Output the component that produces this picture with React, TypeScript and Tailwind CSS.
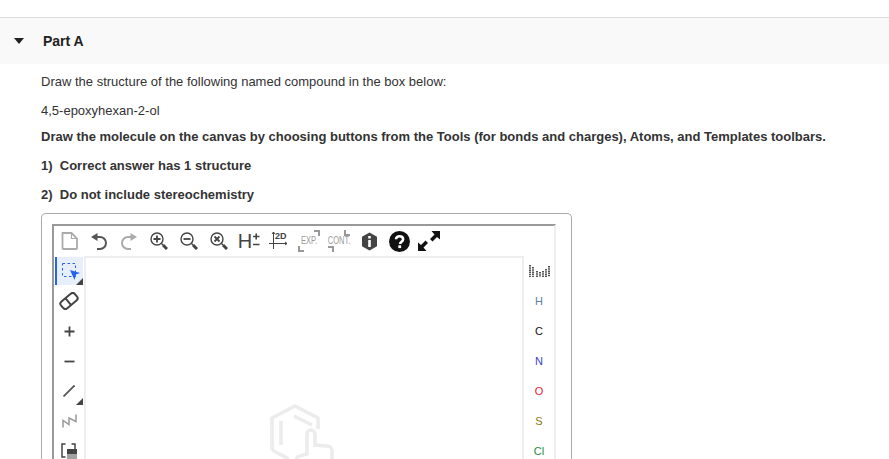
import type { ReactNode } from "react";

const dark = "#444";

function Tool({ children, corner }: { children: ReactNode; corner?: boolean }) {
  return (
    <div className="relative flex h-[30px] w-[30px] shrink-0 items-center justify-center">
      {children}
      {corner && (
        <span className="absolute right-[1px] bottom-[1px] h-0 w-0 border-b-[7px] border-l-[7px] border-b-[#444] border-l-transparent" />
      )}
    </div>
  );
}

function ZoomIcon({ mark }: { mark: "plus" | "minus" | "x" }) {
  return (
    <svg width="18" height="18" viewBox="0 0 18 18" fill="none" stroke={dark} strokeWidth="1.4">
      <circle cx="7" cy="7" r="6" />
      <path d="M11.5 11.5l1.5 1.5" />
      <path d="M13 13l4 4" strokeWidth="3" />
      {mark === "plus" && <path d="M3.500 7h7M7 3.500v7" strokeWidth="1.8" />}
      {mark === "minus" && <path d="M3.500 7h7" strokeWidth="1.8" />}
      {mark === "x" && <path d="M4.500 4.500l5 5M9.500 4.500l-5 5" strokeWidth="1.8" />}
    </svg>
  );
}

function TopToolbar() {
  return (
    <div className="flex h-[30px] shrink-0">
      <Tool>
        <svg width="17" height="18" viewBox="0 0 17 18" fill="none" stroke="#aaa" strokeWidth="1.8">
          <path d="M1.500 1h9l5.500 5.500V16a1 1 0 0 1-1 1H2.500a1 1 0 0 1-1-1z" />
          <path d="M10.500 1v5.500H16" strokeWidth="1.2" />
        </svg>
      </Tool>
      <Tool>
        <svg width="16" height="17" viewBox="0 0 16 17" fill="none" stroke="#555" strokeWidth="2">
          <path d="M5 4h4a6 6 0 0 1 0 12H6" />
          <path d="M6.500 0v8L0 4z" fill="#555" stroke="none" />
        </svg>
      </Tool>
      <Tool>
        <svg width="16" height="17" viewBox="0 0 16 17" fill="none" stroke="#aaa" strokeWidth="2">
          <path d="M11 4H7a6 6 0 0 0 0 12h3" />
          <path d="M9.500 0v8L16 4z" fill="#aaa" stroke="none" />
        </svg>
      </Tool>
      <Tool><ZoomIcon mark="plus" /></Tool>
      <Tool><ZoomIcon mark="minus" /></Tool>
      <Tool><ZoomIcon mark="x" /></Tool>
      <Tool>
        <span className="flex items-start text-[20px] leading-none text-[#444]">
          H
          <svg width="7" height="14" viewBox="0 0 7 14" stroke={dark} strokeWidth="1.6" className="mt-[2px] ml-[1px]">
            <path d="M0 3.500h6.500M3.200 0.500v6M0 11.500h6.500" />
          </svg>
        </span>
      </Tool>
      <Tool>
        <span className="relative block h-[20px] w-[20px]">
          <svg width="20" height="20" viewBox="0 0 20 20" fill="none" stroke={dark} strokeWidth="1">
            <path d="M4.500 1v17M0 12.500h18" />
            <path d="M3 3l1.500-2L6 3M16 11l2 1.500-2 1.500" />
          </svg>
          <span className="absolute top-[0px] left-[6px] text-[9px] leading-[10px] font-bold text-[#444]">2D</span>
        </span>
      </Tool>
      <Tool>
        <span className="relative block h-[22px] w-[22px]">
          <svg width="22" height="22" viewBox="0 0 22 22" fill="none" stroke="#999" strokeWidth="2">
            <path d="M16 1h5v5M1 16v5h5" />
          </svg>
          <span className="absolute inset-0 flex scale-x-75 items-center justify-center text-[10px] leading-none text-[#999]">EXP.</span>
        </span>
      </Tool>
      <Tool>
        <span className="relative block h-[22px] w-[22px]">
          <svg width="22" height="22" viewBox="0 0 22 22" fill="none" stroke="#999" strokeWidth="2">
            <path d="M17 0v5h5M0 17h5v5" />
          </svg>
          <span className="absolute inset-0 flex scale-x-75 items-center justify-center text-[10px] leading-none text-[#999]">CONT.</span>
        </span>
      </Tool>
      <Tool>
        <svg width="17" height="19" viewBox="0 0 17 19">
          <path d="M8.500 0.500l7.500 4.300v9.400l-7.500 4.300L1 14.200V4.800z" fill={dark} />
          <path d="M7.200 4h2.600v2.400H7.200zM7.200 8h2.600v7H7.200z" fill="#fff" />
        </svg>
      </Tool>
      <Tool>
        <svg width="21" height="21" viewBox="0 0 21 21">
          <circle cx="10.500" cy="10.500" r="10.500" fill="#111" />
          <path d="M7 8.200c0-2 1.600-3 3.500-3s3.600 1 3.600 3c0 2.600-3 2.500-3 4.800" fill="none" stroke="#fff" strokeWidth="2.600" />
          <rect x="9.300" y="14.300" width="2.800" height="2.800" fill="#fff" />
        </svg>
      </Tool>
      <Tool>
        <svg width="22" height="20" viewBox="0 0 22 20" fill="#111">
          <path d="M22 0v8.500L19 6l-4.500 4.500L12 8l4.500-4.500L13.500 0z" />
          <path d="M0 20v-8.500L3 14l4.500-4.500L10 12l-4.500 4.500L8.500 20z" />
        </svg>
      </Tool>
    </div>
  );
}

function LeftToolbar() {
  return (
    <div className="flex w-[30px] shrink-0 flex-col">
      <div className="relative mt-[1px] ml-[1px] flex h-[28px] w-[28px] shrink-0 items-center justify-center border-l-2 border-[#2563eb] bg-[#e6effb]">
        <svg width="22" height="22" viewBox="0 0 22 22" fill="none">
          <rect x="3.500" y="3.500" width="13" height="13" stroke="#2563eb" strokeDasharray="2.500 2.500" />
          <path d="M11 10l10 3-4 1.500-1.500 5.500z" fill="#2563eb" />
        </svg>
        <span className="absolute right-0 bottom-0 h-0 w-0 border-b-[7px] border-l-[7px] border-b-[#444] border-l-transparent" />
      </div>
      <div className="h-[1px] shrink-0" />
      <Tool>
        <svg width="20" height="18" viewBox="0 0 20 18" fill="none" stroke={dark} strokeWidth="2">
          <g transform="rotate(-40 10 9)">
            <rect x="1" y="4.500" width="18" height="9" rx="3" />
            <path d="M9 4.500v9" />
          </g>
        </svg>
      </Tool>
      <Tool>
        <svg width="11" height="11" viewBox="0 0 11 11" stroke={dark} strokeWidth="1.800">
          <path d="M0.500 5.500h10M5.500 0.500v10" />
        </svg>
      </Tool>
      <Tool>
        <svg width="11" height="3" viewBox="0 0 11 3" stroke={dark} strokeWidth="1.800">
          <path d="M0.500 1.500h10" />
        </svg>
      </Tool>
      <Tool corner>
        <svg width="12" height="12" viewBox="0 0 12 12" stroke="#555" strokeWidth="1.800">
          <path d="M0.500 11.500l11-11" />
        </svg>
      </Tool>
      <Tool>
        <svg width="15" height="14" viewBox="0 0 15 14" fill="none" stroke="#999" strokeWidth="1.500">
          <path d="M1 13.500V6.500l6 4V4l7 3.500V0.500" />
        </svg>
      </Tool>
      <Tool>
        <svg width="16" height="18" viewBox="0 0 16 18" fill={dark} className="mt-[2px]">
          <path d="M4.500 1H1v13h3.500" fill="none" stroke={dark} strokeWidth="1.500" />
          <path d="M10.500 1H14v5" fill="none" stroke={dark} strokeWidth="1.500" />
          <path d="M6 6h10v5.500H6zM6 12.500h10v1H6zM6 14.500h10v1H6z" />
        </svg>
      </Tool>
    </div>
  );
}

const atoms = [
  ["H", "text-[#5b7fa8]"],
  ["C", "text-[#111]"],
  ["N", "text-[#3a3fd0]"],
  ["O", "text-[#e8203a]"],
  ["S", "text-[#8f7a10]"],
  ["Cl", "text-[#1e8f3a]"],
];

function RightToolbar() {
  return (
    <div className="flex w-[30px] shrink-0 flex-col items-center text-[11px]">
      <div className="flex h-[30px] w-[30px] shrink-0 items-center justify-center">
        <svg width="21" height="12" viewBox="0 0 21 12" stroke="#555" strokeWidth="2" strokeDasharray="1.500 0.700">
          <path d="M1 0v12M4 2v10M8 6v6M11 7v5M14 6v6M17 4v8M20 1v11" />
        </svg>
      </div>
      {atoms.map(([label, color]) => (
        <div key={label} className={`flex h-[30px] shrink-0 items-center ${color}`}>{label}</div>
      ))}
    </div>
  );
}

function Canvas() {
  return (
    <div className="flex min-w-0 flex-1 justify-center border-t-[2px] border-r-[2px] border-l-[2px] border-[#eee] bg-white pt-[145px]">
      <svg width="70" height="62" viewBox="0 0 70 62" fill="none" stroke="#ececec" strokeWidth="3.600" className="shrink-0">
        <path d="M3 47V15L26 3l23 12v11" />
        <path d="M3 47l17 9" />
        <path d="M12 18v24M25 13l18 9" />
        <path d="M26 60l2-5a3 3 0 0 1 3-2l7-2V31a4 4 0 0 1 8 0v11l12 1a5 5 0 0 1 5 5v14" />
      </svg>
    </div>
  );
}

export default function App() {
  return (
    <div className="h-[459px] w-[889px] overflow-hidden bg-white pt-[17px] font-['Liberation_Sans',sans-serif] text-[13px] text-[#333]">
      <div className="flex h-[47px] items-center border-t border-[#ddd] bg-[#f9f9f9] pl-[14px]">
        <span className="h-0 w-0 border-t-[6px] border-r-[5px] border-l-[5px] border-t-[#222] border-r-transparent border-l-transparent" />
        <span className="ml-[19px] text-[14px] font-bold text-[#222]">Part A</span>
      </div>
      <div className="pt-[9px] pl-[41px]">
        <p className="h-[29px] leading-[17px]">Draw the structure of the following named compound in the box below:</p>
        <p className="h-[26px] leading-[17px]">4,5-epoxyhexan-2-ol</p>
        <p className="h-[29px] leading-[17px] font-bold">Draw the molecule on the canvas by choosing buttons from the Tools (for bonds and charges), Atoms, and Templates toolbars.</p>
        <p className="h-[29px] leading-[17px] font-bold">1)&nbsp; Correct answer has 1 structure</p>
        <p className="h-[27px] leading-[17px] font-bold">2)&nbsp; Do not include stereochemistry</p>
        <div className="h-[260px] w-[531px] rounded-t-[5px] border border-b-0 border-[#aaa] pt-[10px] pl-[10px]">
          <div className="flex h-[240px] w-[504px] flex-col border-t-[2px] border-r-[2px] border-l-[2px] border-t-[#999] border-r-[#eee] border-l-[#999]">
            <TopToolbar />
            <div className="flex min-h-0 flex-1">
              <LeftToolbar />
              <Canvas />
              <RightToolbar />
            </div>
          </div>
        </div>
      </div>
    </div>
  );
}
